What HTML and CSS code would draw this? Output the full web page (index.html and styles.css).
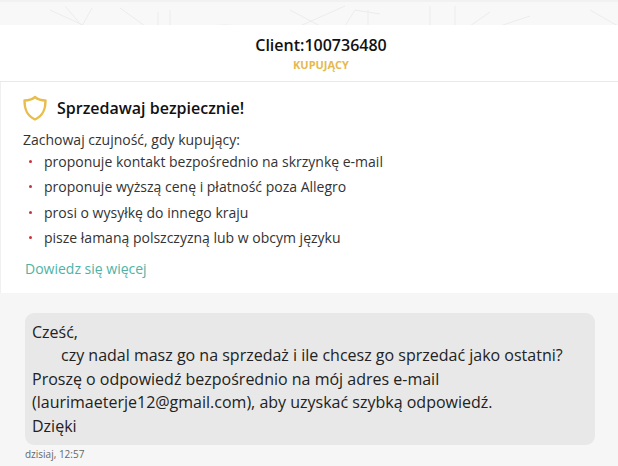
FILE: index.html
```html
<!DOCTYPE html>
<html lang="pl">
<head>
<meta charset="utf-8">
<title>Client:100736480</title>
<link rel="stylesheet" href="styles.css">
</head>
<body>
<div class="topstrip">
  <svg class="doodle" width="618" height="24" viewBox="0 0 618 24" fill="none" stroke="#ececec" stroke-width="1">
    <path d="M50 8L85 24M65 4L82 24L92 6M120 6L145 24M158 24V10M170 24V8M205 24Q225 22 245 24M290 8L320 24M300 24L345 4M345 24L355 8L380 12M368 8V24M430 4V24M455 4V24M470 24L490 10M500 24L530 14M590 8L618 24"/>
  </svg>
</div>
<header class="head">
  <div class="name">Client:100736480</div>
  <div class="role">KUPUJĄCY</div>
</header>
<section class="safety">
  <div class="safety-title">
    <svg class="shield" width="26" height="26" viewBox="0 0 26 26" fill="none" stroke="#e8bd4c" stroke-width="2.400" stroke-linejoin="round">
      <path d="M13 2C10 4.500 6 5.500 2.500 5.500C2.500 14 4.500 20.500 13 24.500C21.500 20.500 23.500 14 23.500 5.500C20 5.500 16 4.500 13 2Z"/>
    </svg>
    <h2>Sprzedawaj bezpiecznie!</h2>
  </div>
  <p class="lead">Zachowaj czujność, gdy kupujący:</p>
  <ul class="tips">
    <li>proponuje kontakt bezpośrednio na skrzynkę e-mail</li>
    <li>proponuje wyższą cenę i płatność poza Allegro</li>
    <li>prosi o wysyłkę do innego kraju</li>
    <li>pisze łamaną polszczyzną lub w obcym języku</li>
  </ul>
  <a class="more" href="#">Dowiedz się więcej</a>
</section>
<section class="chat">
  <div class="bubble">Cześć,
<span class="indent"></span>czy nadal masz go na sprzedaż i ile chcesz go sprzedać jako ostatni?
Proszę o odpowiedź bezpośrednio na mój adres e-mail
(laurimaeterje12@gmail.com), aby uzyskać szybką odpowiedź.
Dzięki</div>
  <div class="time">dzisiaj, 12:57</div>
</section>
</body>
</html>
```
FILE: styles.css
```css
* { box-sizing: border-box; }
html, body { margin: 0; padding: 0; }
body {
  width: 618px;
  height: 466px;
  overflow: hidden;
  background: #fff;
  font-family: "Open Sans", sans-serif;
  color: #222;
}
.topstrip {
  height: 25px;
  background: #f8f8f8;
  border-top: 2px solid #f1f1f1;
  overflow: hidden;
}
.doodle { display: block; }
.head {
  height: 57px;
  padding: 10px 0 0 24px;
  border-bottom: 1px solid #e9e9e9;
  text-align: center;
}
.name {
  font-size: 16px;
  line-height: 20px;
  font-weight: 600;
  color: #111;
}
.role {
  font-size: 11px;
  line-height: 14px;
  margin-top: 3px;
  font-weight: 700;
  color: #e5b94f;
}
.safety {
  height: 211px;
  padding: 12px 0 0 21px;
  border-left: 1px solid #f0f0f0;
}
.safety-title {
  display: flex;
  align-items: center;
  gap: 9px;
  height: 28px;
}
.shield { flex: none; }
.safety-title h2 {
  margin: 0;
  font-size: 16px;
  line-height: 22px;
  font-weight: 600;
  color: #111;
}
.lead {
  margin: 8px 0 0 1px;
  font-size: 14px;
  line-height: 20px;
  color: #333;
}
.tips {
  list-style: none;
  margin: -1px 0 0;
  padding: 0;
}
.tips li {
  position: relative;
  padding-left: 22px;
  font-size: 14px;
  line-height: 25.4px;
  color: #333;
}
.tips li::before {
  content: "";
  position: absolute;
  left: 7px;
  top: 11px;
  width: 3px;
  height: 3px;
  border-radius: 50%;
  background: #c8323c;
}
.more {
  display: block;
  margin: 8px 0 0 3px;
  font-size: 14px;
  line-height: 20px;
  color: #4db3a6;
  text-decoration: none;
}
.chat {
  height: 173px;
  background: #f6f6f6;
  padding: 20px 23px 0 25px;
}
.bubble {
  height: 132px;
  padding: 8px 8px 0 7px;
  background: #e8e8e8;
  border-radius: 9px;
  font-size: 16px;
  line-height: 23.4px;
  white-space: pre-wrap;
  color: #222;
}
.indent {
  display: inline-block;
  width: 29px;
}
.time {
  margin-top: 2px;
  font-size: 10px;
  line-height: 14px;
  color: #666;
}
```
